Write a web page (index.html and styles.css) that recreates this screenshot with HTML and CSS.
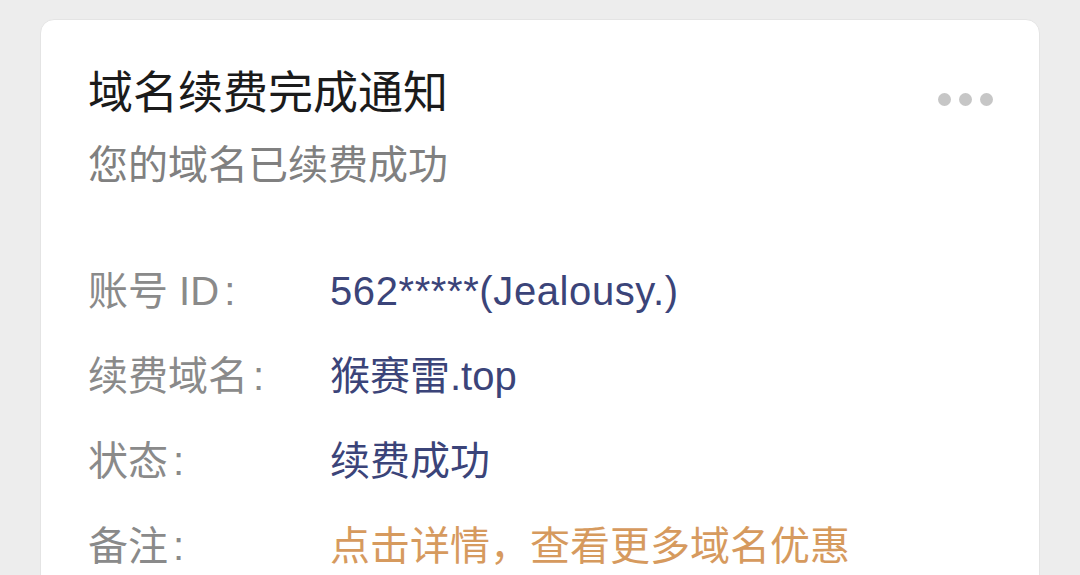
FILE: index.html
```html
<!DOCTYPE html>
<html lang="zh-CN">
<head>
<meta charset="utf-8">
<title>域名续费完成通知</title>
<link rel="stylesheet" href="styles.css">
</head>
<body>
<div class="card">
  <div class="header">
    <h1 class="title">域名续费完成通知</h1>
    <div class="more"><span class="dot"></span><span class="dot"></span><span class="dot"></span></div>
  </div>
  <p class="subtitle">您的域名已续费成功</p>
  <div class="rows">
    <div class="row"><span class="label">账号 ID<span class="colon">:</span></span><span class="value latin">562*****(Jealousy.)</span></div>
    <div class="row"><span class="label">续费域名<span class="colon">:</span></span><span class="value">猴赛雷.top</span></div>
    <div class="row"><span class="label">状态<span class="colon">:</span></span><span class="value">续费成功</span></div>
    <div class="row"><span class="label">备注<span class="colon">:</span></span><span class="value accent">点击详情，查看更多域名优惠</span></div>
  </div>
</div>
</body>
</html>
```
FILE: styles.css
```css
html, body {
  margin: 0;
  padding: 0;
  background: #ededed;
  height: 575px;
  overflow: hidden;
}
body {
  font-family: "Liberation Sans", "Noto Sans CJK SC", sans-serif;
  padding: 19px 0 0 40px;
}
.card {
  width: 1000px;
  height: 700px;
  background: #ffffff;
  border: 1px solid #e4e4e4;
  border-radius: 14px;
  box-sizing: border-box;
  padding: 51px 46px 0 47px;
}
.header {
  display: flex;
  align-items: center;
  justify-content: space-between;
}
.title {
  margin: 0;
  font-size: 45px;
  line-height: 45px;
  font-weight: normal;
  color: #1b1b1b;
}
.more {
  display: flex;
  gap: 8px;
  margin-top: 12px;
}
.dot {
  width: 13px;
  height: 13px;
  border-radius: 50%;
  background: #c6c6c6;
}
.subtitle {
  margin: 29px 0 0;
  font-size: 40px;
  line-height: 40px;
  color: #808080;
}
.rows {
  margin-top: 64px;
}
.row {
  display: flex;
  font-size: 40px;
  line-height: 85px;
  height: 85px;
}
.label {
  width: 242px;
  flex: none;
  color: #8a8a8a;
}
.colon {
  margin-left: 5px;
}
.value {
  color: #3b4479;
}
.latin {
  letter-spacing: 0.6px;
}
.accent {
  color: #d69a5e;
}
```
